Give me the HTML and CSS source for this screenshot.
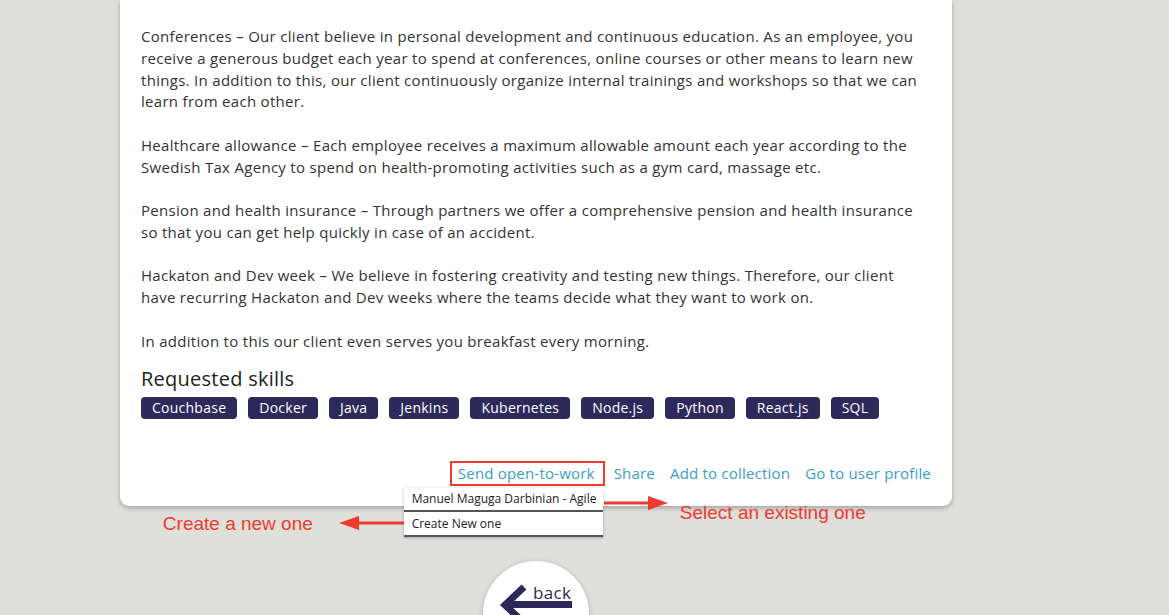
FILE: index.html
```html
<!DOCTYPE html>
<html>
<head>
<meta charset="utf-8">
<link rel="stylesheet" href="styles.css">
</head>
<body>
<div class="page">
  <div class="card">
    <p class="para">Conferences – Our client believe in personal development and continuous education. As an employee, you receive a generous budget each year to spend at conferences, online courses or other means to learn new things. In addition to this, our client continuously organize internal trainings and workshops so that we can learn from each other.</p>
    <p class="para">Healthcare allowance – Each employee receives a maximum allowable amount each year according to the Swedish Tax Agency to spend on health-promoting activities such as a gym card, massage etc.</p>
    <p class="para">Pension and health insurance – Through partners we offer a comprehensive pension and health insurance so that you can get help quickly in case of an accident.</p>
    <p class="para">Hackaton and Dev week – We believe in fostering creativity and testing new things. Therefore, our client have recurring Hackaton and Dev weeks where the teams decide what they want to work on.</p>
    <p class="para last">In addition to this our client even serves you breakfast every morning.</p>
    <h2 class="skills-title">Requested skills</h2>
    <div class="tags">
      <span class="tag">Couchbase</span>
      <span class="tag">Docker</span>
      <span class="tag">Java</span>
      <span class="tag">Jenkins</span>
      <span class="tag">Kubernetes</span>
      <span class="tag">Node.js</span>
      <span class="tag">Python</span>
      <span class="tag">React.js</span>
      <span class="tag">SQL</span>
    </div>
    <div class="actions">
      <div class="send-wrap">
        <a class="link send">Send open-to-work</a>
        <div class="dropdown">
          <div class="dd-item">Manuel Maguga Darbinian - Agile</div>
          <div class="dd-item">Create New one</div>
        </div>
        <svg class="arrow arrow-right" width="64" height="16" viewBox="0 0 64 16"><line x1="0" y1="8" x2="48" y2="8" stroke="#ee3b2e" stroke-width="3"/><polygon points="44,1 64,8 44,15" fill="#ee3b2e"/></svg>
        <span class="note-text note-right">Select an existing one</span>
        <svg class="arrow arrow-left" width="68" height="16" viewBox="0 0 68 16"><line x1="16" y1="8" x2="68" y2="8" stroke="#ee3b2e" stroke-width="3"/><polygon points="20,1 0,8 20,15" fill="#ee3b2e"/></svg>
        <span class="note-text note-left">Create a new one</span>
      </div>
      <a class="link">Share</a>
      <a class="link">Add to collection</a>
      <a class="link">Go to user profile</a>
    </div>
  </div>
  <div class="back">
    <svg class="back-arrow" width="106" height="70" viewBox="0 0 106 70"><polyline points="41,26 22,44 41,62" fill="none" stroke="#2c2857" stroke-width="7" stroke-linejoin="miter"/><line x1="24" y1="43.5" x2="89" y2="43.5" stroke="#2c2857" stroke-width="7"/></svg>
    <span class="back-text">back</span>
  </div>
</div>
</body>
</html>
```
FILE: styles.css
```css
html, body {
  margin: 0;
  padding: 0;
  background: #dfe0db;
  overflow: hidden;
}
.page {
  width: 1169px;
  height: 615px;
  overflow: hidden;
  display: flex;
  flex-direction: column;
  align-items: flex-start;
  font-family: "Open Sans", "Noto Sans", sans-serif;
}
.card {
  flex-shrink: 0;
  margin-left: 120px;
  width: 832px;
  box-sizing: border-box;
  background: #fff;
  border-radius: 0 0 9px 9px;
  box-shadow: 0 2px 5px rgba(0,0,0,0.28);
  padding: 26px 29px 20px 21px;
}
.para {
  margin: 0 0 21.75px 0;
  font-size: 15px;
  line-height: 21.75px;
  color: #333;
  letter-spacing: 0.3px;
}
.para.last { margin-bottom: 14px; }
.skills-title {
  margin: 0;
  font-weight: 400;
  font-size: 20px;
  line-height: 26px;
  color: #222;
  letter-spacing: 0.25px;
}
.tags {
  display: flex;
  gap: 11px;
  margin-top: 5px;
}
.tag {
  background: #2e295b;
  color: #fff;
  font-size: 14px;
  line-height: 22px;
  height: 22px;
  padding: 0 11px;
  border-radius: 4px;
  letter-spacing: 0.25px;
}
.actions {
  display: flex;
  justify-content: flex-end;
  align-items: center;
  gap: 15px;
  margin-top: 42px;
  margin-right: -8px;
}
.link {
  color: #3a9ec4;
  font-size: 15px;
  line-height: 21px;
  letter-spacing: 0.2px;
}
.send-wrap {
  position: relative;
  margin-right: -6px;
}
.send {
  display: block;
  border: 2px solid #ee3b2e;
  padding: 0 8px 0 6px;
}
.dropdown {
  position: absolute;
  right: 2px;
  top: 27px;
  width: 199px;
  background: #fff;
  box-shadow: 0 1px 3px rgba(0,0,0,0.25);
  z-index: 2;
}
.dd-item {
  font-size: 12px;
  line-height: 22px;
  height: 22px;
  padding-left: 8px;
  color: #222;
  border-bottom: 2px solid #555;
  white-space: nowrap;
}
.dd-item + .dd-item { height: 23px; line-height: 23px; }
.arrow {
  position: absolute;
}
.arrow-right {
  left: 154px;
  top: 34px;
}
.arrow-left {
  left: -111px;
  top: 54px;
}
.note-text {
  position: absolute;
  white-space: nowrap;
  font-family: "Liberation Sans", Arial, sans-serif;
  color: #ee3b2e;
  font-size: 19px;
  line-height: 22px;
}
.note-right {
  left: 230px;
  top: 41px;
}
.note-left {
  left: -287px;
  top: 52px;
}
.back {
  flex-shrink: 0;
  margin-left: 483px;
  margin-top: 55px;
  width: 106px;
  height: 106px;
  border-radius: 50%;
  background: #fff;
  box-shadow: 0 1px 5px rgba(0,0,0,0.22);
  position: relative;
  overflow: hidden;
}
.back-arrow {
  position: absolute;
  left: 0;
  top: 0;
}
.back-text {
  position: absolute;
  left: 50px;
  top: 20px;
  font-size: 17px;
  line-height: 24px;
  color: #2e295b;
  letter-spacing: 0.3px;
}
```
